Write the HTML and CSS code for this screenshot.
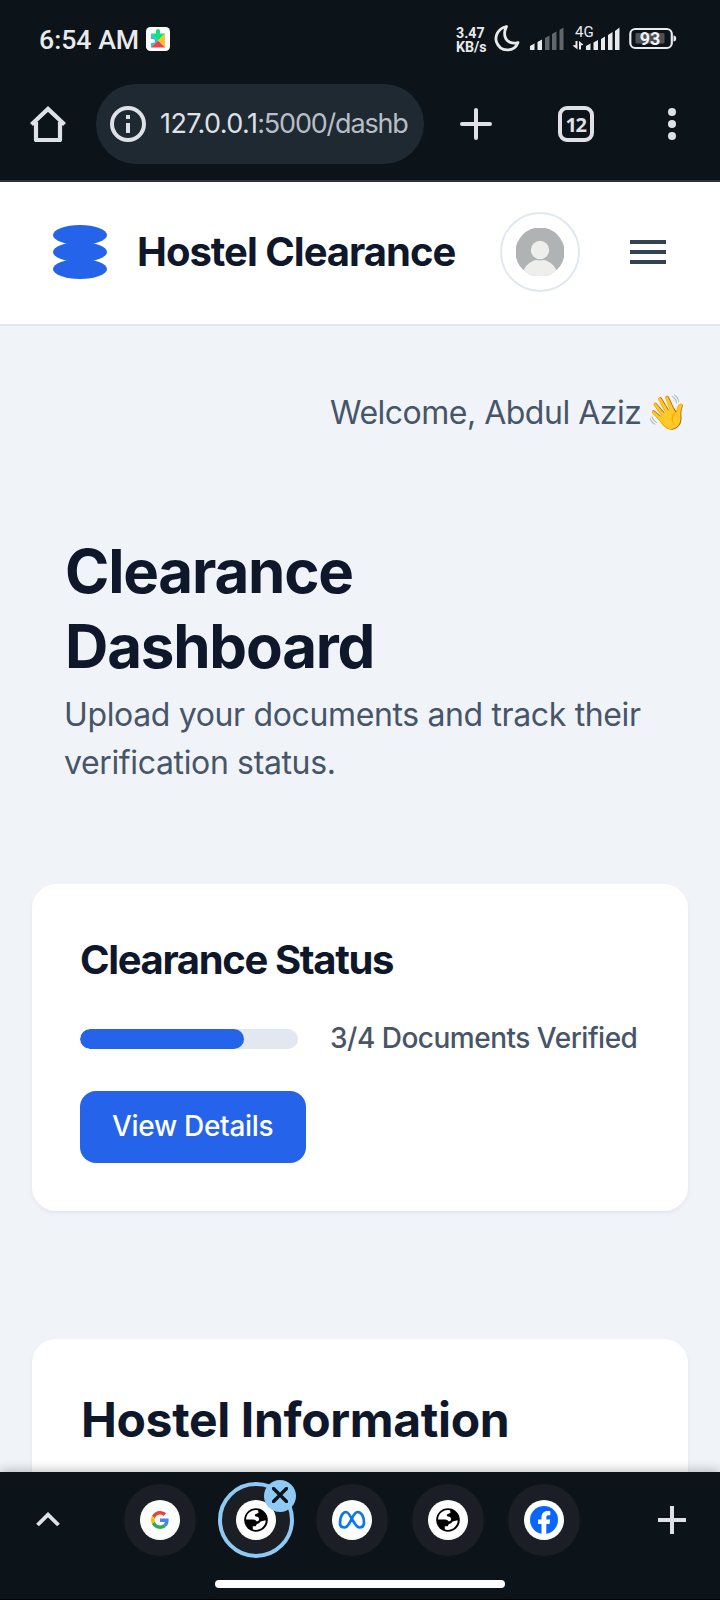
FILE: index.html
```html
<!DOCTYPE html>
<html lang="en">
<head>
<meta charset="utf-8">
<title>Hostel Clearance</title>
<link rel="stylesheet" href="styles.css">
</head>
<body>
<svg width="0" height="0" class="defs">
  <symbol id="globe" viewBox="0 0 24 24">
    <circle cx="12" cy="12" r="11.8" fill="#000"/>
    <path d="M2 11.500A10 10 0 0 1 14 2.200L14.500 4.500C14 6.200 11 5.200 10.800 7.500C11 9 14.500 8 15 10.500C15.500 13 13 14 12 12.800C11 11.500 10 11.500 8 11.500Z" fill="#fff"/>
    <path d="M21.800 12.500A10 10 0 0 1 8.800 21.500V18.200H11.500C12.500 18 12.200 16 13.500 15.800C15.500 15.800 15.500 13.500 17.500 13.200C19 13 20 12.500 21.800 12.500Z" fill="#fff"/>
  </symbol>
</svg>
<div class="screen">
  <div class="status">
    <span class="clock">6:54 AM</span>
    <svg class="puzzle" width="24" height="24" viewBox="0 0 24 24">
      <rect width="24" height="24" rx="4.500" fill="#fff"/>
      <path d="M5 6.500H10V4A2 2 0 0 1 14 4V6.500H19L12 13.500Z" fill="#12e07a"/>
      <path d="M5 6.500L12 13.500L5 20.500V16H7A2 2 0 0 0 7 12H5Z" fill="#24c1ee"/>
      <path d="M19 6.500V20.500L12 13.500Z" fill="#fcc42c"/>
      <path d="M5 20.500H19L12 13.500Z" fill="#f2404b"/>
    </svg>
    <div class="speed">3.47<br>KB/s</div>
    <svg class="indicators" width="184" height="28" viewBox="494 24 184 28">
      <path d="M506.500 26.500C498 28.500 494.500 36 496.500 42C500 52 514 53 518 42.500C506 45.500 502 35.500 506.500 26.500Z" fill="none" stroke="#e8eaec" stroke-width="2.800" stroke-linejoin="round"/>
      <path d="M530 50V46L534.500 43.500V50ZM537.500 50V42L542 39.500V50Z" fill="#e8eaec"/>
      <path d="M545 50V38L549.500 35.500V50ZM552 50V34L556.500 31.500V50ZM559.500 50V30L563.500 27.500V50Z" fill="#60676b"/>
      <text class="net" x="575" y="37.200">4G</text>
      <path d="M572.500 45.500L575.500 45V41H577.500V49.500Z M579 41L583.500 44.800L581 45.500V49.500H579Z" fill="#e8eaec"/>
      <path d="M586 50V46L590.500 43.500V50ZM593.500 50V42.500L598 40V50ZM601 50V39L605 36.500V50ZM608 50V35L612.500 32V50ZM615 50V31L619.500 27.500V50Z" fill="#e8eaec"/>
      <rect x="630.300" y="29" width="41.500" height="19" rx="5" fill="none" stroke="#e8eaec" stroke-width="2.200"/>
      <rect x="635.500" y="33" width="29" height="10.500" rx="1" fill="#4b5054"/>
      <path d="M673.500 35.500Q676.200 35.500 676.200 38.500Q676.200 41.500 673.500 41.500Z" fill="#e8eaec"/>
      <text class="charge" x="650" y="45.200" text-anchor="middle">93</text>
    </svg>
  </div>
  <div class="toolbar">
    <svg class="home" width="36" height="36" viewBox="0 0 36 36" fill="none" stroke="#dfe1e6" stroke-width="4.200" stroke-linejoin="round"><path d="M6 16V34H30V16"/><path d="M1.500 18.500L18 3L34.500 18.500" stroke-linejoin="miter"/></svg>
    <div class="urlbar">
      <svg width="36" height="36" viewBox="0 0 36 36"><circle cx="18" cy="18" r="16" fill="none" stroke="#dfe1e6" stroke-width="4"/><path d="M16 9h4v4h-4zM16 17h4v10h-4z" fill="#dfe1e6"/></svg>
      <span class="url">127.0.0.1<span class="path">:5000/dashb</span></span>
    </div>
    <svg class="add" width="32" height="32" viewBox="0 0 32 32"><path d="M16 2V30M2 16H30" stroke="#dfe1e6" stroke-width="4" stroke-linecap="round"/></svg>
    <div class="tabs">12</div>
    <svg class="dots" width="8" height="32" viewBox="0 0 8 32" fill="#dfe1e6"><circle cx="4" cy="4" r="4"/><circle cx="4" cy="16" r="4"/><circle cx="4" cy="28" r="4"/></svg>
  </div>
  <header class="header">
    <svg width="54" height="54" viewBox="0 0 54 54" fill="#2563eb"><ellipse cx="27" cy="10" rx="27" ry="10"/><ellipse cx="27" cy="27" rx="27" ry="10"/><ellipse cx="27" cy="44" rx="27" ry="10"/></svg>
    <span class="brand">Hostel Clearance</span>
    <div class="avatar">
      <svg width="48" height="48" viewBox="0 0 48 48"><clipPath id="face"><circle cx="24" cy="24" r="24.500"/></clipPath><g clip-path="url(#face)"><rect width="48" height="48" fill="#afb3b4"/><path d="M5 50C7 38 15 31.500 24 31.500S41 38 43 50Z" fill="#eeeeec"/><circle cx="24" cy="22" r="10.500" fill="#afb3b4"/><circle cx="24" cy="22" r="9.200" fill="#eeeeec"/></g></svg>
    </div>
    <div class="burger"><i></i><i></i><i></i></div>
  </header>
  <main class="main">
    <p class="welcome"><span class="hello">Welcome, Abdul Aziz</span><span class="wave">👋</span></p>
    <h1 class="title">Clearance<br>Dashboard</h1>
    <p class="lead">Upload your documents and track their<br>verification status.</p>
    <section class="card">
      <h2 class="status-title">Clearance Status</h2>
      <div class="progress"><div class="track"><div class="fill" style="width:75%"></div></div><span class="count">3/4 Documents Verified</span></div>
      <a class="button"><span>View Details</span></a>
    </section>
    <section class="card second"><h2 class="info-title">Hostel Information</h2></section>
  </main>
  <footer class="dock">
    <div class="row">
      <svg class="up" width="24" height="15" viewBox="0 0 24 15"><path d="M1.500 13L12 2.700L22.500 13" fill="none" stroke="#dfe1e6" stroke-width="3.800"/></svg>
      <div class="sites">
        <div class="site"><div class="disc"><svg width="18" height="18" viewBox="0 0 48 48"><path fill="#EA4335" d="M24 9.500c3.540 0 6.710 1.220 9.210 3.600l6.850-6.850C35.900 2.380 30.470 0 24 0 14.620 0 6.510 5.380 2.560 13.220l7.980 6.190C12.430 13.720 17.740 9.500 24 9.500z"/><path fill="#4285F4" d="M46.980 24.550c0-1.570-.15-3.090-.38-4.550H24v9.020h12.940c-.58 2.960-2.260 5.480-4.780 7.180l7.730 6c4.510-4.180 7.090-10.360 7.090-17.650z"/><path fill="#FBBC05" d="M10.530 28.590c-.48-1.450-.76-2.990-.76-4.590s.27-3.140.76-4.590l-7.980-6.190C.92 16.460 0 20.120 0 24s.92 7.540 2.560 10.780z"/><path fill="#34A853" d="M24 48c6.480 0 11.930-2.130 15.890-5.810l-7.730-6c-2.150 1.450-4.920 2.300-8.160 2.300-6.260 0-11.570-4.220-13.470-9.910l-7.980 6.190C6.510 42.620 14.620 48 24 48z"/></svg></div></div>
        <div class="site active"><div class="disc"><svg width="24" height="24"><use href="#globe"/></svg></div>
          <div class="close"><svg width="16" height="16" viewBox="0 0 16 16"><path d="M1.500 1.500L14.500 14.500M14.500 1.500L1.500 14.500" stroke="#0c1319" stroke-width="3.300" stroke-linecap="round"/></svg></div></div>
        <div class="site"><div class="disc"><svg width="28" height="20" viewBox="0 0 28 20"><path d="M2 13C2 7 4.500 2 8 2C12.500 2 16 17.500 21.500 17.500C24.500 17.500 26 15.500 26 12.500C26 7 23.500 2 19.700 2C14 2 12.500 17.500 6.500 17.500C3.500 17.500 2 16 2 13Z" fill="none" stroke="#0877ed" stroke-width="2.700"/></svg></div></div>
        <div class="site"><div class="disc"><svg width="24" height="24"><use href="#globe"/></svg></div></div>
        <div class="site"><div class="disc"><svg width="28" height="28" viewBox="0 0 28 28"><circle cx="14" cy="14" r="14" fill="#0866ff"/><path d="M11.500 28V18H8V13.500H11.500V11.500C11.500 7.200 14 5 17.500 5C18.900 5 20.300 5.200 20.300 5.200V9.200H18.300C16.700 9.200 16.300 10.200 16.300 11.400V13.500H20.200L19.500 18H16.300V28Z" fill="#fff"/></svg></div></div>
      </div>
      <svg class="plus" width="28" height="28" viewBox="0 0 28 28"><path d="M14 0V28M0 14H28" stroke="#dfe1e6" stroke-width="4"/></svg>
    </div>
    <div class="pill"></div>
  </footer>
</div>
</body>
</html>
```
FILE: styles.css
```css
* { box-sizing: border-box; }
body { margin: 0; background: #0c1319; }
p, h1, h2 { margin: 0; }
svg { display: block; flex: none; }
.defs { position: absolute; }
.screen { width: 720px; height: 1600px; overflow: hidden; display: flex; flex-direction: column; font-family: Inter, "Noto Sans", sans-serif; white-space: nowrap; background: #f0f4f9; }

.status { height: 78px; flex: none; display: flex; align-items: center; padding-left: 39px; background: #0c1319; color: #e8eaec; font-family: Roboto, sans-serif; }
.clock { width: 107px; padding-top: 2px; font-size: 26.7px; font-weight: 500; line-height: 32px; }
.speed { width: 38px; margin-left: 286px; font-size: 14.2px; font-weight: 700; line-height: 14.5px; padding-top: 2px; }
.indicators { margin-top: -2px; }
.net { font-size: 15px; fill: #e8eaec; font-family: Roboto, sans-serif; }
.charge { font-size: 18px; font-weight: 700; fill: #f1f2f3; font-family: Roboto, sans-serif; }

.toolbar { height: 104px; flex: none; display: flex; align-items: center; padding: 0 44px 10px 30px; background: #0c1319; border-bottom: 2px solid #2d3337; }
.urlbar { display: flex; align-items: center; width: 328px; height: 80px; margin-left: 30px; padding: 0 16px 0 14px; gap: 14px; border-radius: 40px; background: #1e2931; }
.url { width: 248px; overflow: hidden; font-size: 27px; line-height: 36px; color: #dfe1e6; letter-spacing: -0.6px; }
.path { color: #b7bec8; letter-spacing: -1.2px; }
.add { margin-left: 36px; }
.tabs { width: 36px; height: 36px; margin-left: 66px; border: 4px solid #dfe1e6; border-radius: 9px; color: #dfe1e6; font: 700 20px/29px "Open Sans", sans-serif; letter-spacing: -1.5px; text-indent: -1px; text-align: center; }
.dots { margin-left: 74px; }

.header { height: 144px; flex: none; display: flex; align-items: center; padding: 0 0 2px 53px; background: #fff; border-bottom: 2px solid #e2e8f0; }
.brand { width: 363px; margin-left: 30px; font-size: 40px; font-weight: 700; line-height: 56px; color: #0f172a; letter-spacing: -1px; }
.avatar { width: 80px; height: 80px; display: flex; align-items: center; justify-content: center; border: 2px solid #e2e8f0; border-radius: 50%; }
.burger { width: 36px; margin-left: 50px; display: flex; flex-direction: column; gap: 6px; }
.burger i { height: 4px; background: #334155; }

.main { flex: 1; min-height: 0; overflow: hidden; padding: 63px 32px 0; color: #0f172a; }
.welcome { display: flex; justify-content: flex-end; height: 48px; font-size: 32px; line-height: 48px; color: #475569; letter-spacing: -.5px; }
.hello { width: 311px; margin-right: 9px; margin-left: -1px; }
.wave { width: 39px; font-size: 30px; font-family: "Noto Color Emoji", Inter, sans-serif; letter-spacing: 0; margin-left: -1px; transform: scale(1.130); transform-origin: 50% 50%; }
.title { padding: 97px 32px 0 33px; font-size: 60px; line-height: 75px; font-weight: 700; letter-spacing: -1.200px; }
.lead { padding: 7px 32px 0; font-size: 32px; line-height: 48px; color: #475569; letter-spacing: -.36px; }
.card { margin-top: 97px; padding: 48px; height: 327px; border-radius: 24px; background: #fff; box-shadow: 0 2px 4px rgba(15, 23, 42, .06); }
.status-title { padding-top: 1px; font-size: 40px; font-weight: 700; line-height: 54px; letter-spacing: -1.360px; }
.progress { display: flex; align-items: center; margin-top: 31px; height: 42px; }
.track { flex: none; width: 218px; height: 20px; border-radius: 10px; background: #e2e8f0; overflow: hidden; }
.fill { height: 20px; border-radius: 10px; background: #2563eb; }
.count { margin-left: 32px; font-size: 28px; font-weight: 500; line-height: 42px; color: #475569; margin-top: -2px; letter-spacing: -.5px; }
.button { display: flex; align-items: center; width: 226px; height: 72px; margin-top: 31px; padding: 0 0 2px 32px; border-radius: 16px; background: #2563eb; color: #fff; font-size: 28px; font-weight: 500; line-height: 42px; letter-spacing: -.3px; }
.second { margin-top: 128px; }
.info-title { padding: 2px 0 0 1px; font-size: 48px; line-height: 62px; font-weight: 700; letter-spacing: -.35px; }

.dock { position: relative; height: 128px; flex: none; background: #0c1319; border-bottom: 1px solid #000; box-shadow: 0 -2px 10px rgba(0, 0, 0, .24); }
.row { display: flex; align-items: center; height: 96px; padding: 0 34px 0 36px; }
.up { margin-top: -1px; }
.sites { display: flex; align-items: center; gap: 24px; margin-left: 64px; }
.site { position: relative; width: 72px; height: 72px; border-radius: 50%; background: #1b1f25; display: flex; align-items: center; justify-content: center; }
.active { width: 76px; height: 76px; margin: 0 -2px; border: 4px solid #8ecaf3; }
.disc { width: 40px; height: 40px; border-radius: 50%; background: #fff; display: flex; align-items: center; justify-content: center; }
.close { position: absolute; top: -6px; right: -6px; width: 32px; height: 32px; padding-bottom: 2px; border-radius: 50%; background: #8ecaf3; display: flex; align-items: center; justify-content: center; }
.plus { margin-left: auto; }
.pill { width: 290px; height: 8px; margin: 12px auto 0; border-radius: 4px; background: #fff; }
```
